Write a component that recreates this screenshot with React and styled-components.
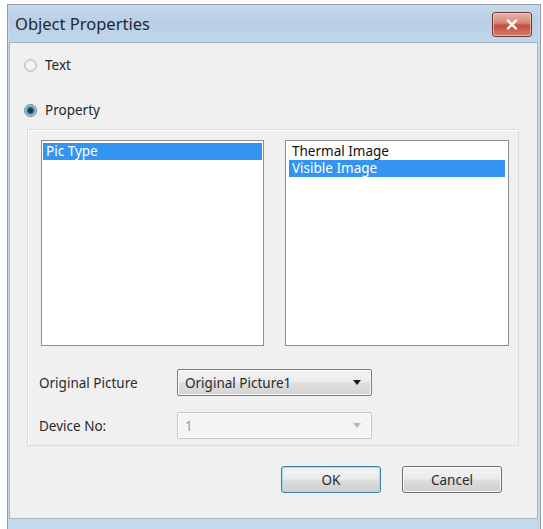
import React from "react";
import styled, { createGlobalStyle } from "styled-components";

const Global = createGlobalStyle`
  html, body { margin: 0; padding: 0; background: #ffffff; }
  body { font-family: "Noto Sans", "Open Sans", sans-serif; color: #262626; }
  * { box-sizing: border-box; }
`;

const Window = styled.div`
  margin: 4px 2px 0 7px;
  width: 534px;
  height: 525px;
  display: flex;
  flex-direction: column;
  border: 1px solid #8f9caa;
  border-bottom: none;
  background: #c6d8ec;
  padding: 0 2px 0 1px;
`;

const TitleBar = styled.div`
  height: 37px;
  display: flex;
  align-items: center;
  justify-content: space-between;
  padding: 0 6px 0 6px;
  background: linear-gradient(180deg, #c7d9ec 0%, #b9cfe6 45%, #c1d5ea 100%);
`;

const Title = styled.span`
  font-size: 16.5px;
  color: #1f2733;
  margin-top: -1px;
`;

const CloseButton = styled.button`
  width: 40px;
  height: 25px;
  margin-top: 2px;
  border: 1px solid #6e3a3c;
  border-radius: 3px;
  background: linear-gradient(180deg, #e6b3a9 0%, #d68a7b 42%, #c44d40 55%, #d58070 100%);
  box-shadow: inset 0 0 0 1px rgba(255, 220, 210, 0.55);
  display: flex;
  align-items: center;
  justify-content: center;
  padding: 0;
`;

const Body = styled.div`
  flex: 0 0 auto;
  height: 477px;
  background: #f0f0f0;
  border: 1px solid #a7b4c2;
  border-top-color: #9fb0c3;
  display: flex;
  flex-direction: column;
  padding: 13px 18px 0 14px;
`;

const RadioRow = styled.label`
  display: flex;
  align-items: center;
  gap: 8px;
  height: 18px;
  font-size: 13.5px;
  margin-bottom: ${(p) => p.$after}px;
`;

const RadioDot = styled.span`
  width: 13px;
  height: 13px;
  border-radius: 50%;
  border: 1px solid ${(p) => (p.$on ? "#6b7a86" : "#b6bcc2")};
  background: ${(p) =>
    p.$on
      ? "radial-gradient(circle at 50% 50%, #123a4c 0 22%, #2f7fa8 42%, #9fc4d6 62%, #e9eef1 75%)"
      : "radial-gradient(circle at 50% 50%, #f3f3f3 0 40%, #dcdfe2 75%)"};
  flex: 0 0 auto;
`;

const Panel = styled.div`
  margin-left: 3px;
  border: 1px solid #d9dde1;
  box-shadow: inset 1px 1px 0 #ffffff;
  padding: 10px 9px 6px 13px;
  display: flex;
  flex-direction: column;
`;

const Lists = styled.div`
  display: flex;
  gap: 21px;
`;

const ListBox = styled.div`
  width: ${(p) => p.$w}px;
  height: 206px;
  background: #ffffff;
  border: 1px solid #8a8f96;
  padding: 2px ${(p) => p.$inset}px;
  display: flex;
  flex-direction: column;
`;

const ListItem = styled.div`
  height: 17px;
  line-height: 17px;
  font-size: 13.5px;
  padding-left: 3px;
  white-space: nowrap;
  color: ${(p) => (p.$sel ? "#ffffff" : "#111111")};
  background: ${(p) => (p.$sel ? "#3395f0" : "transparent")};
`;

const Fields = styled.div`
  display: grid;
  grid-template-columns: 138px 195px;
  row-gap: 16px;
  margin-top: 23px;
  margin-left: -2px;
  align-items: center;
`;

const FieldLabel = styled.span`
  font-size: 13.5px;
  color: #2a2a2a;
`;

const Combo = styled.div`
  height: 27px;
  border: 1px solid ${(p) => (p.$disabled ? "#c4c8cc" : "#7b7f84")};
  border-radius: 2px;
  background: ${(p) =>
    p.$disabled
      ? "#f4f4f4"
      : "linear-gradient(180deg, #f4f4f4 0%, #ebebeb 48%, #dedede 52%, #d4d4d4 100%)"};
  box-shadow: inset 0 0 0 1px ${(p) => (p.$disabled ? "#fbfbfb" : "#fafafa")};
  display: flex;
  align-items: center;
  justify-content: space-between;
  padding: 0 10px 0 7px;
  font-size: 13.5px;
  color: ${(p) => (p.$disabled ? "#9a9a9a" : "#2a2a2a")};
`;

const Arrow = styled.span`
  width: 0;
  height: 0;
  border-left: 4px solid transparent;
  border-right: 4px solid transparent;
  border-top: 5px solid ${(p) => (p.$disabled ? "#b8b8b8" : "#1a1a1a")};
`;

const Buttons = styled.div`
  display: flex;
  justify-content: flex-end;
  gap: 21px;
  margin-top: 20px;
  margin-right: 17px;
`;

const Button = styled.button`
  width: 100px;
  height: 27px;
  border-radius: 3px;
  border: 1px solid ${(p) => (p.$default ? "#3d7fa8" : "#707070")};
  background: linear-gradient(180deg, #f3f3f3 0%, #ebebeb 48%, #dddddd 52%, #cfcfcf 100%);
  box-shadow: inset 0 0 0 1px ${(p) => (p.$default ? "#a6dcef" : "#fbfbfb")};
  font-family: "Noto Sans", "Open Sans", sans-serif;
  font-size: 13.5px;
  color: #2a2a2a;
  padding: 0;
`;

export default function App() {
  return (
    <>
      <Global />
      <Window>
        <TitleBar>
          <Title>Object Properties</Title>
          <CloseButton aria-label="Close">
            <svg width="12" height="11" viewBox="0 0 12 11">
              <path d="M2 1.5 L10 9.5 M10 1.5 L2 9.5" stroke="#ffffff" strokeWidth="2.4" strokeLinecap="round" />
            </svg>
          </CloseButton>
        </TitleBar>
        <Body>
          <RadioRow $after={27}>
            <RadioDot />
            Text
          </RadioRow>
          <RadioRow $after={10}>
            <RadioDot $on />
            Property
          </RadioRow>
          <Panel>
            <Lists>
              <ListBox $w={224} $inset={1}>
                <ListItem $sel>Pic Type</ListItem>
              </ListBox>
              <ListBox $w={225} $inset={3}>
                <ListItem>Thermal Image</ListItem>
                <ListItem $sel>Visible Image</ListItem>
              </ListBox>
            </Lists>
            <Fields>
              <FieldLabel>Original Picture</FieldLabel>
              <Combo>
                Original Picture1
                <Arrow />
              </Combo>
              <FieldLabel>Device No:</FieldLabel>
              <Combo $disabled>
                1
                <Arrow $disabled />
              </Combo>
            </Fields>
          </Panel>
          <Buttons>
            <Button $default>OK</Button>
            <Button>Cancel</Button>
          </Buttons>
        </Body>
      </Window>
    </>
  );
}
